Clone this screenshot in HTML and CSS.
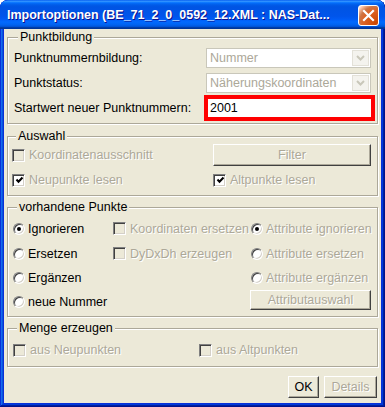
FILE: index.html
```html
<!DOCTYPE html>
<html lang="de">
<head>
    <meta charset="UTF-8">
    <title>Importoptionen</title>
    <link rel="stylesheet" href="styles.css">
</head>
<body>
    <div class="window">
        <div class="titlebar">
            <span class="title">Importoptionen (BE_71_2_0_0592_12.XML : NAS-Dat...</span>
            <span class="close">
                <svg width="19" height="19" viewBox="0 0 19 19"><path d="M5 5 L14 14 M14 5 L5 14" stroke="#fff" stroke-width="2.2" stroke-linecap="square"/></svg>
            </span>
        </div>

        <div class="client">
            <fieldset class="group g-punkt">
                <legend>Punktbildung</legend>
                <div class="form-row">
                    <span class="lbl">Punktnummernbildung:</span>
                    <div class="combo"><span class="combo-text">Nummer</span><span class="combo-btn"><svg width="9" height="6" viewBox="0 0 9 6"><path d="M1 1 L4.5 4.5 L8 1" fill="none" stroke="#c9c7ba" stroke-width="2"/></svg></span></div>
                </div>
                <div class="form-row">
                    <span class="lbl">Punktstatus:</span>
                    <div class="combo"><span class="combo-text">Näherungskoordinaten</span><span class="combo-btn"><svg width="9" height="6" viewBox="0 0 9 6"><path d="M1 1 L4.5 4.5 L8 1" fill="none" stroke="#c9c7ba" stroke-width="2"/></svg></span></div>
                </div>
                <div class="form-row row-input">
                    <span class="lbl">Startwert neuer Punktnummern:</span>
                    <div class="textfield">2001</div>
                </div>
            </fieldset>

            <fieldset class="group g-auswahl">
                <legend>Auswahl</legend>
                <div class="grid2">
                    <label class="opt off"><span class="check disabled"></span>Koordinatenausschnitt</label>
                    <button class="btn off btn-filter">Filter</button>
                    <label class="opt off"><span class="check checked"><svg width="9" height="9" viewBox="0 0 9 9"><path d="M1.5 3.5 L3.5 5.8 L7.5 1.5" fill="none" stroke="#000" stroke-width="2"/></svg></span>Neupunkte lesen</label>
                    <label class="opt off"><span class="check checked"><svg width="9" height="9" viewBox="0 0 9 9"><path d="M1.5 3.5 L3.5 5.8 L7.5 1.5" fill="none" stroke="#000" stroke-width="2"/></svg></span>Altpunkte lesen</label>
                </div>
            </fieldset>

            <fieldset class="group g-vorhanden">
                <legend>vorhandene Punkte</legend>
                <div class="grid3">
                    <label class="opt rad"><span class="radio on"></span>Ignorieren</label>
                    <label class="opt off"><span class="check disabled"></span>Koordinaten ersetzen</label>
                    <label class="opt rad off"><span class="radio on"></span>Attribute ignorieren</label>

                    <label class="opt rad"><span class="radio"></span>Ersetzen</label>
                    <label class="opt off"><span class="check disabled"></span>DyDxDh erzeugen</label>
                    <label class="opt rad off"><span class="radio"></span>Attribute ersetzen</label>

                    <label class="opt rad"><span class="radio"></span>Ergänzen</label>
                    <span></span>
                    <label class="opt rad off"><span class="radio"></span>Attribute ergänzen</label>

                    <label class="opt rad"><span class="radio"></span>neue Nummer</label>
                    <span></span>
                    <button class="btn off btn-attr">Attributauswahl</button>
                </div>
            </fieldset>

            <fieldset class="group g-menge">
                <legend>Menge erzeugen</legend>
                <div class="grid-menge">
                    <label class="opt off"><span class="check disabled"></span>aus Neupunkten</label>
                    <label class="opt off"><span class="check disabled"></span>aus Altpunkten</label>
                </div>
            </fieldset>

            <div class="actions">
                <button class="btn btn-ok">OK</button>
                <button class="btn off btn-details">Details</button>
            </div>
        </div>
    </div>
</body>
</html>
```

FILE: styles.css
```css
body {
    margin: 0;
    background: #fff;
    font-family: "Liberation Sans", Arial, sans-serif;
    font-size: 12.5px;
    color: #000;
}

.window {
    width: 385px;
    height: 407px;
    display: flex;
    flex-direction: column;
    background: #0831d9;
    border-radius: 8px 8px 0 0;
    box-shadow: inset -1px -1px #00138c, inset 1px 1px #0831d9, inset -2px -2px #001ea0, inset 2px 2px #166aee, inset -3px -3px #003bda, inset 3px 3px #0855dd;
    overflow: hidden;
}

.titlebar {
    height: 29px;
    flex: none;
    display: flex;
    align-items: center;
    justify-content: space-between;
    padding: 0 6px 0 7px;
    border-radius: 8px 8px 0 0;
    background: linear-gradient(to bottom, #0058ee 0%, #3593ff 4%, #288eff 6%, #127dff 8%, #036ffc 10%, #0262ee 14%, #0057e5 20%, #0054e3 24%, #0055eb 56%, #005bf5 66%, #026afe 76%, #0062ef 86%, #0052d6 92%, #0040ab 94%, #003092 100%);
}

.title {
    color: #fff;
    font-weight: bold;
    font-size: 12.5px;
    text-shadow: 1px 1px #0f1089;
    white-space: nowrap;
    padding-top: 1px;
}

.close {
    width: 21px;
    height: 21px;
    box-sizing: border-box;
    border: 1px solid #fff;
    border-radius: 3px;
    background: radial-gradient(circle at 90% 90%, #cc4600 0%, #dc6527 55%, #cd7546 70%, #ffccb2 90%, #fff 100%);
    display: flex;
    align-items: center;
    justify-content: center;
    margin-top: 1px;
}

.client {
    flex: 1;
    margin: 0 4px 4px;
    padding: 1px 3px 0;
    background: #ece9d8;
}

.group {
    margin: 0 0 5px;
    border: 1px solid #aca899;
    box-shadow: inset 1px 1px #fff, 1px 1px #fff;
    min-width: 0;
}

.group legend {
    margin-left: 4px;
    padding: 0 2px;
    line-height: 15px;
    background: #ece9d8;
}

.g-punkt {
    padding: 3px 0 2px 6px;
}

.g-auswahl {
    padding: 0 0 4px 4px;
    margin-bottom: 4px;
}

.g-vorhanden {
    padding: 1px 0 2px 5px;
    margin-bottom: 4px;
}

.g-menge {
    padding: 2px 0 4px 5px;
    margin-bottom: 9px;
}

/* Punktbildung */
.form-row {
    display: flex;
    align-items: center;
    height: 20px;
}

.form-row + .form-row {
    margin-top: 5px;
}

.form-row.row-input {
    height: 26px;
    margin-top: 2px;
}

.lbl {
    width: 192px;
    flex: none;
}

.combo {
    width: 165px;
    height: 20px;
    box-sizing: border-box;
    border: 1px solid #c9c7ba;
    background: #fff;
    display: flex;
    align-items: center;
}

.combo-text {
    flex: 1;
    padding-left: 3px;
    color: #aca899;
}

.combo-btn {
    width: 17px;
    height: 16px;
    margin-right: 1px;
    box-sizing: border-box;
    border: 1px solid #e3e1d8;
    background: #f4f3ee;
    display: flex;
    align-items: center;
    justify-content: center;
}

.textfield {
    width: 171px;
    height: 26px;
    margin-left: -2px;
    box-sizing: border-box;
    border: 4px solid #f00;
    background: #fff;
    padding-left: 2px;
    line-height: 18px;
}

/* options */
.opt {
    display: flex;
    align-items: center;
    gap: 4px;
    white-space: nowrap;
}

.opt.rad {
    gap: 3px;
}

.off {
    color: #aca899;
    text-shadow: 1px 1px #fff;
}

.check {
    width: 13px;
    height: 13px;
    flex: none;
    box-sizing: border-box;
    border: 1px solid;
    border-color: #808080 #fff #fff #808080;
    box-shadow: inset 1px 1px #404040, inset -1px -1px #d4d0c8;
    background: #fff;
    display: flex;
    align-items: center;
    justify-content: center;
}

.check.disabled {
    background: #ece9d8;
}

.check svg {
    margin: 1px 0 0 1px;
}

.radio {
    width: 12px;
    height: 12px;
    flex: none;
    box-sizing: border-box;
    border-radius: 50%;
    border: 1px solid;
    border-color: #808080 #fff #fff #808080;
    box-shadow: inset 1px 1px #404040, inset -1px -1px #d4d0c8;
    background: #fff;
    position: relative;
}

.radio.on::after {
    content: '';
    position: absolute;
    left: 3px;
    top: 3px;
    width: 4px;
    height: 4px;
    border-radius: 50%;
    background: #000;
}

.grid2 {
    display: grid;
    grid-template-columns: 201px 158px;
    grid-template-rows: 22px 22px;
    row-gap: 3px;
    align-items: center;
}

.grid3 {
    display: grid;
    grid-template-columns: 100px 138px 121px;
    grid-template-rows: 25px 25px 24px 24px;
    align-items: center;
}

.grid-menge {
    display: grid;
    grid-template-columns: 186px auto;
    height: 24px;
    align-items: center;
}

/* buttons */
.btn {
    font: inherit;
    height: 22px;
    padding: 0;
    background: #ece9d8;
    border: 1px solid;
    border-color: #fff #404040 #404040 #fff;
    box-shadow: inset -1px -1px #aca899;
    color: #000;
}

.btn.off {
    color: #aca899;
}

.btn-filter {
    width: 158px;
}

.btn-attr {
    width: 121px;
    height: 20px;
    margin-left: -1px;
    align-self: start;
}

.actions {
    display: flex;
    justify-content: flex-end;
    gap: 5px;
    padding-right: 1px;
}

.btn-ok {
    width: 31px;
}

.btn-details {
    width: 53px;
}
```
